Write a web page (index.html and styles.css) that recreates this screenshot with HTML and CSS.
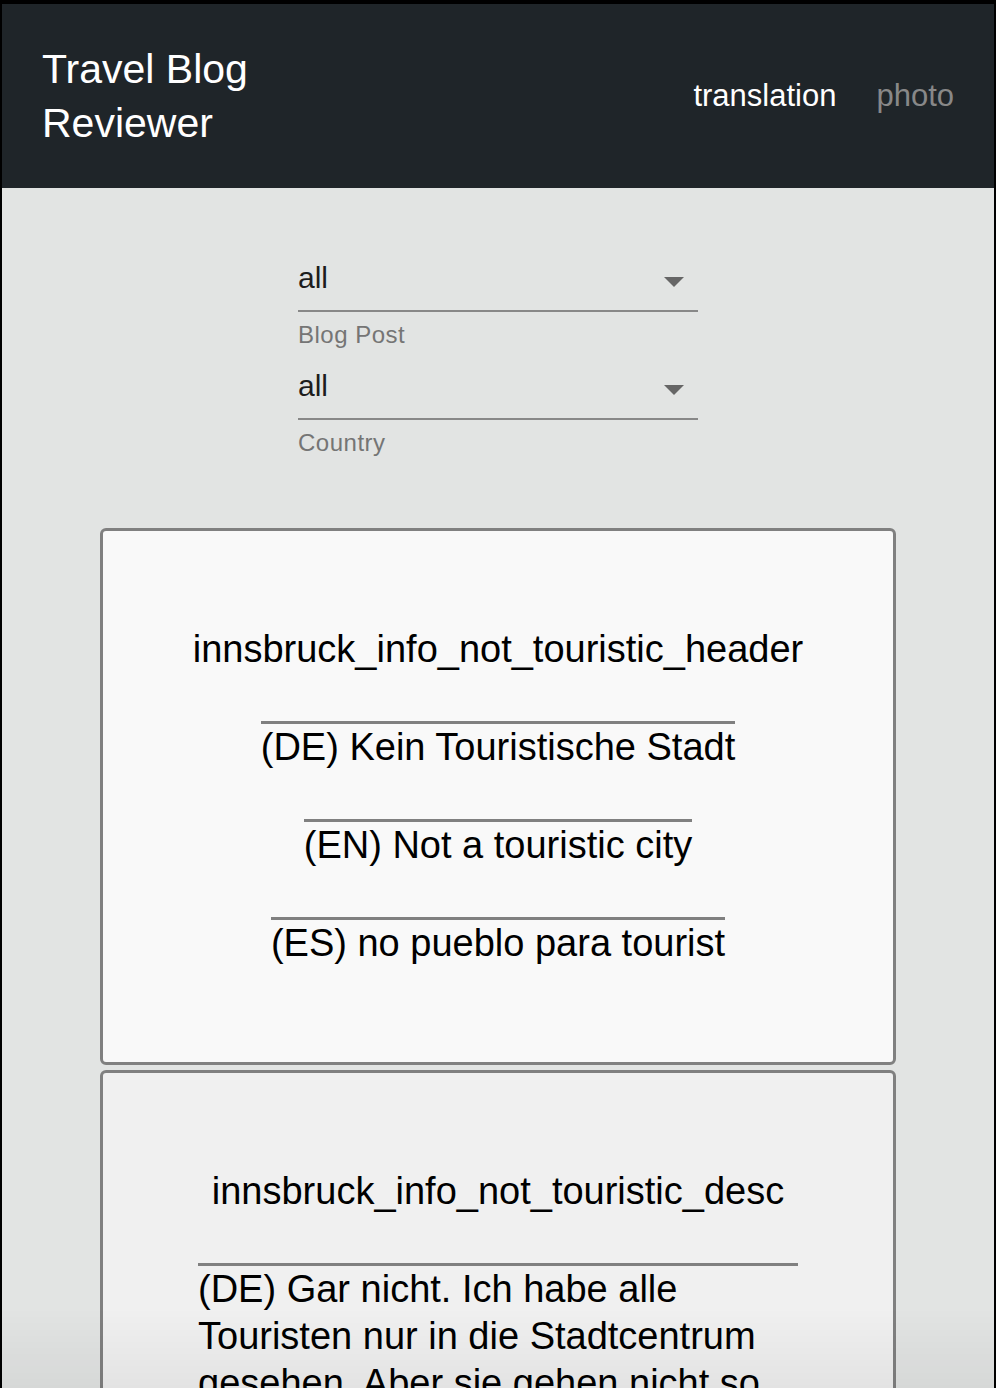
FILE: index.html
```html
<!DOCTYPE html>
<html lang="en">
<head>
    <meta charset="UTF-8">
    <meta name="viewport" content="width=device-width, initial-scale=1.0">
    <title>Travel Blog Reviewer</title>
    <link rel="stylesheet" href="styles.css">
</head>
<body>
<header class="topbar">
    <div class="brand">Travel Blog Reviewer</div>
    <nav class="nav">
        <a href="#" class="nav-link active">translation</a>
        <a href="#" class="nav-link">photo</a>
    </nav>
</header>

<div class="filters">
    <div class="field">
        <div class="select">
            <span>all</span>
            <svg class="arrow" width="20" height="10" viewBox="0 0 20 10"><path d="M0 0h20L10 10z" fill="#666"/></svg>
        </div>
        <div class="field-label">Blog Post</div>
    </div>
    <div class="field">
        <div class="select">
            <span>all</span>
            <svg class="arrow" width="20" height="10" viewBox="0 0 20 10"><path d="M0 0h20L10 10z" fill="#666"/></svg>
        </div>
        <div class="field-label">Country</div>
    </div>
</div>

<div class="entries">
    <div class="entry">
        <p class="entry-key">innsbruck_info_not_touristic_header</p>
        <p class="translation">(DE) Kein Touristische Stadt</p>
        <p class="translation">(EN) Not a touristic city</p>
        <p class="translation">(ES) no pueblo para tourist</p>
    </div>
    <div class="entry">
        <p class="entry-key">innsbruck_info_not_touristic_desc</p>
        <p class="translation">(DE) Gar nicht. Ich habe alle Touristen nur in die Stadtcentrum gesehen. Aber sie gehen nicht so weit.</p>
    </div>
</div>

<div class="fade"></div>
</body>
</html>
```

FILE: styles.css
```css
html {
    background-color: #000;
}

body {
    margin: 4px 2px 0 2px;
    background-color: #e2e4e3;
    font-family: "Liberation Sans", Arial, sans-serif;
    min-height: 1400px;
}

/* Top bar */
.topbar {
    display: flex;
    justify-content: space-between;
    align-items: center;
    padding: 38px 40px;
    background-color: #1f2529;
}

.brand {
    width: 250px;
    font-size: 41px;
    line-height: 54px;
    color: #fff;
}

.nav {
    display: flex;
    gap: 40px;
}

.nav-link {
    font-size: 31px;
    color: #888;
    text-decoration: none;
}

.nav-link.active {
    color: #fff;
}

/* Filters */
.filters {
    width: 400px;
    margin: 0 auto;
    padding: 72px 0 71px;
}

.field + .field {
    margin-top: 19px;
}

.select {
    display: flex;
    justify-content: space-between;
    align-items: center;
    padding-bottom: 14px;
    border-bottom: 2px solid #888;
    font-size: 30px;
    line-height: 36px;
    color: #1d1d1d;
}

.arrow {
    margin: 7px 14px 0 0;
}

.field-label {
    margin-top: 9px;
    font-size: 24px;
    line-height: 28px;
    letter-spacing: 0.5px;
    color: #757575;
}

/* Entries */
.entry {
    display: flex;
    flex-direction: column;
    align-items: center;
    gap: 48px;
    width: 796px;
    box-sizing: border-box;
    margin: 0 auto 5px;
    padding: 95px 0;
    background-color: #f9f9f9;
    border: 3px solid #808080;
    border-radius: 6px;
}

.entry:nth-child(even) {
    background-color: #f0f0f0;
}

.entry p {
    margin: 0;
    font-size: 38px;
    line-height: 47px;
    color: #000;
}

.translation {
    max-width: 600px;
    border-top: 3px solid #808080;
}

/* bottom shade of the window */
.fade {
    position: fixed;
    left: 0;
    right: 0;
    bottom: 0;
    height: 80px;
    background: linear-gradient(to bottom, rgba(0, 0, 0, 0), rgba(0, 0, 0, 0.05));
    pointer-events: none;
}
```
